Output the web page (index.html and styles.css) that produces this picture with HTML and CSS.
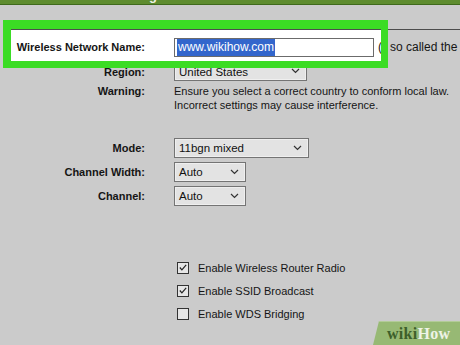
FILE: index.html
```html
<!DOCTYPE html>
<html lang="en">
<head>
    <meta charset="UTF-8">
    <meta name="viewport" content="width=device-width, initial-scale=1.0">
    <title>Wireless Settings</title>
    <link rel="stylesheet" href="styles.css">
</head>
<body>
    <div class="topbar"><span class="topbar-title">Wireless Settings</span></div>

    <div class="form">
        <div class="name-row">
            <div class="highlight">
                <div class="highlight-inner">
                    <span class="label">Wireless Network Name:</span>
                    <span class="textbox"><span class="selected">www.wikihow.com</span></span>
                    <span class="paren">(</span>
                </div>
            </div>
            <div class="hint">so called the SSID)</div>
        </div>

        <div class="row row-region">
            <span class="label">Region:</span>
            <div class="select select-wide">
                <span>United States</span>
                <svg width="9" height="6" viewBox="0 0 9 6"><path d="M1 1 L4.5 4.5 L8 1" fill="none" stroke="#333" stroke-width="1.2"/></svg>
            </div>
        </div>

        <div class="row row-warning">
            <span class="label">Warning:</span>
            <div class="warning-text">Ensure you select a correct country to conform local law.<br>Incorrect settings may cause interference.</div>
        </div>

        <div class="row row-mode">
            <span class="label">Mode:</span>
            <div class="select select-mode">
                <span>11bgn mixed</span>
                <svg width="9" height="6" viewBox="0 0 9 6"><path d="M1 1 L4.5 4.5 L8 1" fill="none" stroke="#333" stroke-width="1.2"/></svg>
            </div>
        </div>

        <div class="row">
            <span class="label">Channel Width:</span>
            <div class="select select-small">
                <span>Auto</span>
                <svg width="9" height="6" viewBox="0 0 9 6"><path d="M1 1 L4.5 4.5 L8 1" fill="none" stroke="#333" stroke-width="1.2"/></svg>
            </div>
        </div>

        <div class="row">
            <span class="label">Channel:</span>
            <div class="select select-small">
                <span>Auto</span>
                <svg width="9" height="6" viewBox="0 0 9 6"><path d="M1 1 L4.5 4.5 L8 1" fill="none" stroke="#333" stroke-width="1.2"/></svg>
            </div>
        </div>

        <div class="checks">
            <div class="check-row">
                <span class="checkbox"><svg width="11" height="11" viewBox="0 0 11 11"><path d="M2 5.5 L4.3 8.2 L9 2.5" fill="none" stroke="#222" stroke-width="1.3"/></svg></span>
                <span>Enable Wireless Router Radio</span>
            </div>
            <div class="check-row">
                <span class="checkbox"><svg width="11" height="11" viewBox="0 0 11 11"><path d="M2 5.5 L4.3 8.2 L9 2.5" fill="none" stroke="#222" stroke-width="1.3"/></svg></span>
                <span>Enable SSID Broadcast</span>
            </div>
            <div class="check-row">
                <span class="checkbox"></span>
                <span>Enable WDS Bridging</span>
            </div>
        </div>
    </div>

    <div class="logo"><span class="logo-wiki">wiki</span><span class="logo-how">How</span></div>
</body>
</html>
```

FILE: styles.css
```css
body {
    margin: 0;
    width: 460px;
    height: 345px;
    overflow: hidden;
    background-color: #cbcbcb;
    font-family: "Liberation Sans", Arial, sans-serif;
    font-size: 11px;
    color: #151515;
    position: relative;
}

.topbar {
    height: 4px;
    background-color: #5e8c2f;
    border-bottom: 1px solid #3f6a1c;
    overflow: hidden;
}

.topbar-title {
    display: block;
    margin-top: -11px;
    padding-left: 56px;
    font-size: 13px;
    font-weight: bold;
    line-height: 14px;
    color: #eef3e6;
}

.form {
    padding-top: 15px;
}

/* Zeile mit Markierung */
.name-row {
    display: flex;
    align-items: flex-start;
}

.highlight {
    position: relative;
    z-index: 2;
    margin-left: 3px;
    width: 385px;
    box-sizing: border-box;
    border-style: solid;
    border-color: #3bdc24;
    border-width: 9px 7px 7px 8px;
}

.highlight-inner {
    height: 32px;
    box-sizing: border-box;
    border-top: 1px solid #4d4d4d;
    background-color: #fff;
    padding-top: 8px;
    display: flex;
    align-items: flex-start;
    overflow: hidden;
    white-space: nowrap;
}

.highlight-inner .label {
    width: 134px;
}

.label {
    font-weight: bold;
    text-align: right;
    line-height: 19px;
    flex-shrink: 0;
}

.textbox {
    margin-left: 29px;
    width: 200px;
    height: 19px;
    box-sizing: border-box;
    border: 1px solid #6b6b6b;
    background-color: #fff;
    padding: 0 0 0 2px;
    flex-shrink: 0;
}

.selected {
    display: inline-block;
    background-color: #3366cc;
    color: #fff;
    font-size: 12px;
    line-height: 17px;
    padding: 0 1px;
}

.paren {
    margin-left: 4px;
    font-size: 12px;
    line-height: 19px;
}

.hint {
    flex: 1;
    margin-top: 9px;
    border-top: 1px solid #4d4d4d;
    padding: 8px 0 0 2px;
    font-size: 12px;
    line-height: 19px;
    white-space: nowrap;
    overflow: hidden;
}

/* Normale Zeilen */
.row {
    display: grid;
    grid-template-columns: 145px auto;
    column-gap: 29px;
    align-items: center;
    margin-top: 4px;
}

.row .label {
    line-height: 20px;
}

.row-region {
    margin-top: -7px;
    align-items: end;
}

.row-region .label {
    line-height: 18px;
}

.row-region .select {
    align-items: flex-end;
    padding-bottom: 2px;
}

.row-warning {
    align-items: start;
    margin-top: 3px;
}

.row-warning .label {
    line-height: 14px;
}

.warning-text {
    line-height: 14px;
    white-space: nowrap;
}

.row-mode {
    margin-top: 26px;
}

.select {
    height: 20px;
    box-sizing: border-box;
    border: 1px solid #747474;
    background-color: #e3e3e3;
    box-shadow: inset 0 0 0 1px #efefef;
    display: flex;
    align-items: center;
    justify-content: space-between;
    padding: 0 6px 0 4px;
    font-size: 11.5px;
    color: #111;
}

.row-region svg {
    margin-bottom: 4px;
}

.select-wide {
    width: 133px;
}

.select-mode {
    width: 135px;
}

.select-small {
    width: 72px;
}

.checks {
    margin-top: 50px;
    padding-left: 177px;
}

.check-row {
    height: 23px;
    display: flex;
    align-items: center;
    gap: 9px;
}

.checkbox {
    width: 12px;
    height: 12px;
    box-sizing: border-box;
    border: 1px solid #333;
    background-color: #e6e6e6;
    display: flex;
    align-items: center;
    justify-content: center;
}

/* Wasserzeichen */
.logo {
    position: absolute;
    right: 0;
    bottom: 0;
    width: 87px;
    height: 24px;
    box-sizing: border-box;
    padding: 3px 0 0 14px;
    background-color: #97b974;
    border-top: 1px solid #b3cc98;
    clip-path: polygon(6px 0, 100% 0, 100% 100%, 0 100%);
    font-family: "Liberation Serif", "DejaVu Serif", serif;
    font-size: 16px;
    font-weight: bold;
    line-height: 18px;
    letter-spacing: 0.3px;
}

.logo-wiki {
    color: #3d5f2a;
}

.logo-how {
    color: #eef3e6;
}
```
